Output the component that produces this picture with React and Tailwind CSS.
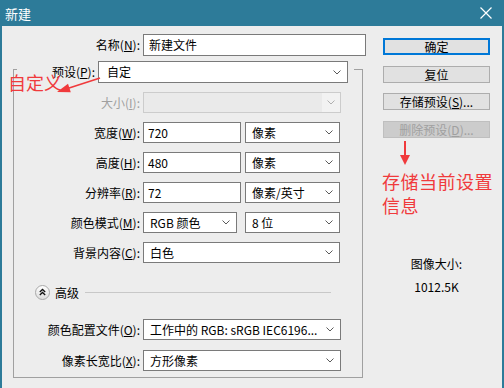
import React from "react";

const Chevron = ({ c = "#5a5a5a" }) => (
  <svg width="8" height="5" viewBox="0 0 8 5" className="shrink-0">
    <polyline points="0.5,0.5 4,4 7.5,0.5" fill="none" stroke={c} strokeWidth="1" />
  </svg>
);

const Label = ({ children, className }) => (
  <div className={className}>{children}</div>
);

const Sel = ({ text, className }) => (
  <div className={"flex items-center justify-between border border-[#7a7a7a] bg-white pl-[6px] pr-[6px] h-full " + className}>
    <span className="whitespace-nowrap leading-none">{text}</span>
    <Chevron />
  </div>
);

const Inp = ({ text, className }) => (
  <div className={"flex items-center border border-[#7a7a7a] bg-white pl-[4px] h-full " + className}>
    <span className="whitespace-nowrap leading-none">{text}</span>
  </div>
);

const Row = ({ label, children, mt, disabled }) => (
  <div className={"flex items-center h-[21px] " + mt}>
    <div className={"w-[126px] text-right whitespace-nowrap leading-none " + (disabled ? "text-[#a0a0a0]" : "text-black")}>
      {label}
    </div>
    <div className="ml-[3px] flex h-full">{children}</div>
  </div>
);

export default function App() {
  return (
    <div className="w-[504px] h-[388px] bg-[#ededed] border-x-2 border-[#2d7b99] relative overflow-hidden font-['Noto_Sans_CJK_SC',sans-serif] text-[12px] text-black">
      {/* title bar */}
      <div className="h-[26px] bg-[#2d7b99] -mx-[2px] flex items-center justify-between pl-[5px] pr-[12px]">
        <span className="text-white text-[13px] leading-none">新建</span>
        <svg width="12" height="12" viewBox="0 0 12 12">
          <path d="M0.5 0.5L11.5 11.5M11.5 0.5L0.5 11.5" stroke="white" strokeWidth="1.2" fill="none" />
        </svg>
      </div>

      <div className="flex">
        {/* left column */}
        <div className="ml-[11px] w-[353px] pt-[8px]">
          <div className="flex items-center h-[22px]">
            <div className="w-[127px] text-right leading-none">
              名称(<u>N</u>):
            </div>
            <Inp text="新建文件" className="ml-[3px] w-[223px] pl-[5px]" />
          </div>

          <div className="mt-[13px] w-[350px] h-[309px] border border-[#a0a0a0]">
            {/* legend row */}
            <div className="-mt-[9px] ml-[3px] pr-[6px] h-[22px] w-[337px] bg-[#ededed] flex items-center">
              <div className="w-[78px] text-right leading-none">
                预设(<u>P</u>):
              </div>
              <Sel text="自定" className="ml-[3px] w-[250px] pl-[8px]" />
            </div>

            <Row label={<>大小(<u>I</u>):</>} mt="mt-[9px]" disabled>
              <div className="flex items-center justify-end border border-[#cccccc] bg-[#eaeaea] w-[198px] h-full">
                <div className="h-full w-[18px] bg-[#f2f2f2] flex items-center justify-center">
                  <Chevron c="#b0b0b0" />
                </div>
              </div>
            </Row>
            <Row label={<>宽度(<u>W</u>):</>} mt="mt-[9px]">
              <Inp text="720" className="w-[98px]" />
              <Sel text="像素" className="ml-[4px] w-[95px]" />
            </Row>
            <Row label={<>高度(<u>H</u>):</>} mt="mt-[9px]">
              <Inp text="480" className="w-[98px]" />
              <Sel text="像素" className="ml-[4px] w-[95px]" />
            </Row>
            <Row label={<>分辨率(<u>R</u>):</>} mt="mt-[9px]">
              <Inp text="72" className="w-[98px]" />
              <Sel text="像素/英寸" className="ml-[4px] w-[95px]" />
            </Row>
            <Row label={<>颜色模式(<u>M</u>):</>} mt="mt-[9px]">
              <Sel text="RGB 颜色" className="w-[94px]" />
              <Sel text="8 位" className="ml-[8px] w-[95px]" />
            </Row>
            <Row label={<>背景内容(<u>C</u>):</>} mt="mt-[9px]">
              <Sel text="白色" className="w-[197px]" />
            </Row>

            {/* advanced */}
            <div className="mt-[22px] h-[15px] flex items-center">
              <svg width="15" height="15" viewBox="0 0 15 15" className="ml-[21px] shrink-0">
                <defs>
                  <linearGradient id="adv" x1="0" y1="0" x2="0" y2="1">
                    <stop offset="0" stopColor="#ffffff" />
                    <stop offset="1" stopColor="#dcdcdc" />
                  </linearGradient>
                </defs>
                <circle cx="7.5" cy="7.5" r="7" fill="url(#adv)" stroke="#a8a8a8" strokeWidth="1" />
                <polyline points="4.8,7 7.5,4.5 10.2,7" fill="none" stroke="#111" strokeWidth="1.3" />
                <polyline points="4.8,10 7.5,7.5 10.2,10" fill="none" stroke="#111" strokeWidth="1.3" />
              </svg>
              <span className="ml-[5px] leading-none">高级</span>
              <div className="ml-[6px] mr-[31px] flex-1 h-px bg-[#c8c8c8]" />
            </div>

            <Row label={<>颜色配置文件(<u>O</u>):</>} mt="mt-[19px]">
              <Sel text="工作中的 RGB: sRGB IEC6196..." className="w-[198px]" />
            </Row>
            <Row label={<>像素长宽比(<u>X</u>):</>} mt="mt-[10px]">
              <Sel text="方形像素" className="w-[198px]" />
            </Row>
          </div>
        </div>

        {/* right column */}
        <div className="ml-[17px] w-[107px] pt-[12px] flex flex-col">
          <div className="h-[17px] border-2 border-[#0078d7] bg-[#e1e1e1] flex items-center justify-center leading-none">
            确定
          </div>
          <div className="mt-[11px] h-[17px] border border-[#adadad] bg-[#e1e1e1] flex items-center justify-center leading-none">
            复位
          </div>
          <div className="mt-[10px] h-[17px] border border-[#adadad] bg-[#e1e1e1] flex items-center justify-center leading-none">
            存储预设(<u>S</u>)...
          </div>
          <div className="mt-[11px] h-[17px] border border-[#bfbfbf] bg-[#cccccc] text-[#a0a0a0] flex items-center justify-center leading-none">
            删除预设(<u>D</u>)...
          </div>
          <div className="mt-[118px] text-center leading-[16px]">图像大小:</div>
          <div className="mt-[7px] text-center leading-[16px]">1012.5K</div>
        </div>
      </div>

      {/* red annotations */}
      <div className="absolute left-[6px] top-[72px] text-[18px] leading-[20px] text-[#f03a3c] whitespace-nowrap">
        自定义
      </div>
      <div className="absolute left-[380px] top-[169px] text-[18px] leading-[24px] tracking-[0.5px] text-[#f03a3c] whitespace-nowrap">
        存储当前设置
        <br />
        信息
      </div>
      <svg className="absolute left-0 top-0 pointer-events-none" width="504" height="388" viewBox="0 0 504 388">
        <line x1="98" y1="78" x2="64" y2="89" stroke="#f03a3c" strokeWidth="1.6" />
        <polygon points="55,92 68.8,92.3 66,83.7" fill="#f03a3c" />
        <line x1="403" y1="141" x2="403" y2="157" stroke="#f03a3c" strokeWidth="2" />
        <polygon points="403,165 398,155 408,155" fill="#f03a3c" />
      </svg>
    </div>
  );
}
